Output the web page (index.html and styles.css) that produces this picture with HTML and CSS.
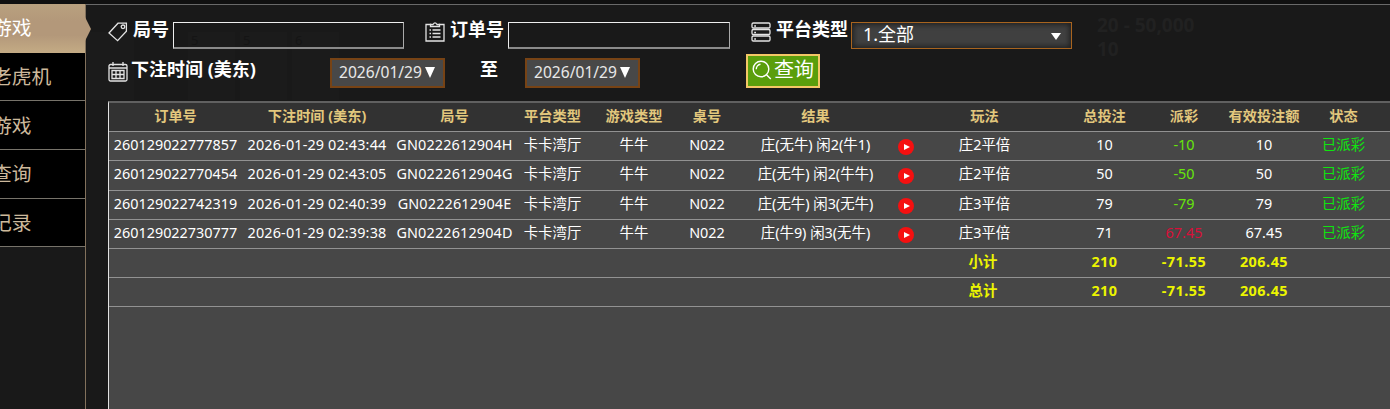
FILE: index.html
```html
<!DOCTYPE html>
<html lang="zh-CN">
<head>
    <meta charset="UTF-8">
    <meta name="viewport" content="width=device-width, initial-scale=1.0">
    <title>下注记录</title>
    <link rel="stylesheet" href="styles.css">
</head>
<body>
    <!-- 背景牌桌, 被遮罩压暗 -->
    <div class="backdrop">
        <div class="ghost-card card-1"></div>
        <div class="ghost-card card-2">5</div>
        <div class="ghost-card card-3">5</div>
        <div class="ghost-card card-4">6</div>
        <div class="ghost-text ghost-limit">20 - 50,000</div>
        <div class="ghost-text ghost-total">10</div>
    </div>

    <div class="page">
        <nav class="sidebar">
            <a class="side-item active">游戏</a>
            <a class="side-item">老虎机</a>
            <a class="side-item">游戏</a>
            <a class="side-item">查询</a>
            <a class="side-item">记录</a>
        </nav>

        <main class="main">
            <div class="filters">
                <div class="filter-row">
                    <div class="field field-round">
                        <svg class="icon" viewBox="0 0 20 20"><path d="M1 11 L10 1.2 H18.4 V9.2 L9.6 18.7 Z"/><circle cx="15" cy="4.8" r="1.8"/></svg>
                        <label class="label">局号</label>
                        <input class="text-input input-round" type="text">
                    </div>
                    <div class="field field-order">
                        <svg class="icon" viewBox="0 0 20 20"><path d="M6 2.5 H1 V19 H19 V2.5 H14"/><path d="M5.5 4.5 V2.5 H8 Q10 -.8 12 2.5 H14.5 V4.5 Z"/><path d="M7.5 8 H15.5 M7.5 11.5 H15.5 M7.5 15 H15.5 M4.5 8 H6 M4.5 11.5 H6 M4.5 15 H6"/></svg>
                        <label class="label">订单号</label>
                        <input class="text-input input-order" type="text">
                    </div>
                    <div class="field">
                        <svg class="icon" viewBox="0 0 20 20"><rect x="1" y="1" width="18" height="5" rx="1.3"/><rect x="1" y="7.5" width="18" height="5" rx="1.3"/><rect x="1" y="14" width="18" height="5" rx="1.3"/><path d="M3.2 4 H5 M3.2 10.5 H5 M3.2 17 H5"/></svg>
                        <label class="label">平台类型</label>
                        <div class="select"><span>1.全部</span><i class="caret"></i></div>
                    </div>
                </div>
                <div class="filter-row row-date">
                    <svg class="icon" viewBox="0 0 20 20"><rect x="1" y="2.5" width="18" height="16.5" rx="1.5"/><path d="M1 6 H19 M5 0 V4 M15 0 V4 M4 8.5 H16 V16.5 H4 Z M4 12.5 H16 M8 8.5 V16.5 M12 8.5 V16.5"/></svg>
                    <label class="label label-date">下注时间 (美东)</label>
                    <button class="date">2026/01/29<i class="caret"></i></button>
                    <span class="label label-to">至</span>
                    <button class="date">2026/01/29<i class="caret"></i></button>
                    <button class="search">
                        <svg class="search-icon" viewBox="0 0 20 20"><circle cx="9" cy="9" r="7.8"/><path d="M14.5 14.7 L18.8 19 M4.3 9.2 A4.8 4.8 0 0 1 8.5 4.3"/></svg>
                        <span>查询</span>
                    </button>
                </div>
            </div>

            <div class="table-box">
                <table class="table">
                    <colgroup>
                        <col class="c-order"><col class="c-time"><col class="c-round"><col class="c-platform">
                        <col class="c-game"><col class="c-desk"><col class="c-result"><col class="c-play">
                        <col class="c-method"><col class="c-bet"><col class="c-payout"><col class="c-valid"><col class="c-status"><col>
                    </colgroup>
                    <thead>
                        <tr>
                            <th>订单号</th><th>下注时间 (美东)</th><th>局号</th><th>平台类型</th><th>游戏类型</th><th>桌号</th><th>结果</th><th></th>
                            <th>玩法</th><th>总投注</th><th>派彩</th><th>有效投注额</th><th>状态</th><th></th>
                        </tr>
                    </thead>
                    <tbody>
                        <tr>
                            <td>260129022777857</td><td class="time">2026-01-29 02:43:44</td><td class="round">GN0222612904H</td><td>卡卡湾厅</td><td>牛牛</td><td>N022</td>
                            <td>庄(无牛) 闲2(牛1)</td><td><i class="play"></i></td><td>庄2平倍</td><td>10</td><td class="lose">-10</td><td>10</td><td class="paid">已派彩</td><td></td>
                        </tr>
                        <tr>
                            <td>260129022770454</td><td class="time">2026-01-29 02:43:05</td><td class="round">GN0222612904G</td><td>卡卡湾厅</td><td>牛牛</td><td>N022</td>
                            <td>庄(无牛) 闲2(牛牛)</td><td><i class="play"></i></td><td>庄2平倍</td><td>50</td><td class="lose">-50</td><td>50</td><td class="paid">已派彩</td><td></td>
                        </tr>
                        <tr>
                            <td>260129022742319</td><td class="time">2026-01-29 02:40:39</td><td class="round">GN0222612904E</td><td>卡卡湾厅</td><td>牛牛</td><td>N022</td>
                            <td>庄(无牛) 闲3(无牛)</td><td><i class="play"></i></td><td>庄3平倍</td><td>79</td><td class="lose">-79</td><td>79</td><td class="paid">已派彩</td><td></td>
                        </tr>
                        <tr>
                            <td>260129022730777</td><td class="time">2026-01-29 02:39:38</td><td class="round">GN0222612904D</td><td>卡卡湾厅</td><td>牛牛</td><td>N022</td>
                            <td>庄(牛9) 闲3(无牛)</td><td><i class="play"></i></td><td>庄3平倍</td><td>71</td><td class="win">67.45</td><td>67.45</td><td class="paid">已派彩</td><td></td>
                        </tr>
                        <tr class="sum">
                            <td colspan="8"></td><td class="sum-name">小计</td><td>210</td><td>-71.55</td><td>206.45</td><td colspan="2"></td>
                        </tr>
                        <tr class="sum">
                            <td colspan="8"></td><td class="sum-name">总计</td><td>210</td><td>-71.55</td><td>206.45</td><td colspan="2"></td>
                        </tr>
                    </tbody>
                </table>
            </div>
        </main>
    </div>
</body>
</html>
```

FILE: styles.css
```css
* {
    box-sizing: border-box;
}

body {
    margin: 0;
    height: 409px;
    overflow: hidden;
    background: #191919;
    color: #fff;
    font-family: "Noto Sans", "Noto Sans CJK SC", sans-serif;
    font-size: 14.4px;
}

button,
input {
    font-family: inherit;
    margin: 0;
}

/* 背景 */
.backdrop {
    position: absolute;
    inset: 0;
    overflow: hidden;
}

.ghost-card {
    position: absolute;
    top: 32px;
    width: 47px;
    height: 68px;
    padding: 0 3px;
    background: #1b1b1b;
    color: #151515;
    font-size: 13px;
    line-height: 16px;
}

.card-1 { left: 87px; }
.card-2 { left: 188px; }
.card-3 { left: 240px; }
.card-4 { left: 292px; }

.ghost-text {
    position: absolute;
    color: #212121;
    font-weight: bold;
    font-size: 19px;
    line-height: 24px;
}

.ghost-limit { left: 1097px; top: 13px; }
.ghost-total { left: 1097px; top: 37px; }

.page {
    position: relative;
    display: flex;
    height: 409px;
    border-top: 4px solid #101010;
}

/* 左侧菜单 */
.sidebar {
    width: 86px;
    flex: none;
    border-right: 1px solid #82715c;
}

.side-item {
    display: flex;
    align-items: center;
    height: 48.7px;
    padding-bottom: 2px;
    background: #000;
    border-bottom: 1px solid #77736a;
    color: #cdb99c;
    font-size: 19.8px;
    white-space: nowrap;
    text-indent: -8px;
}

.side-item.active {
    position: relative;
    background: linear-gradient(#b9a17f, #b3987a 35%, #b3987a 65%, #c3aa84);
    border-bottom-color: #c3aa84;
    color: #fff;
}

.side-item.active::after {
    content: '';
    position: absolute;
    left: 85px;
    top: 13px;
    border-left: 6px solid #b3987a;
    border-top: 12px solid transparent;
    border-bottom: 12px solid transparent;
}

.main {
    flex: 1;
    min-width: 0;
    display: flex;
    flex-direction: column;
    padding-left: 22px;
    border-top: 1px solid #696969;
}

/* 查询条件 */
.filters {
    height: 96px;
    flex: none;
    padding-top: 17px;
}

.filter-row {
    display: flex;
    align-items: flex-start;
    height: 32px;
}

.field {
    display: flex;
    align-items: flex-start;
}

.field-round { width: 317px; }
.field-order { width: 326px; }

.icon {
    width: 20px;
    height: 20px;
    margin-right: 5px;
    flex: none;
    fill: none;
    stroke: #e4e4e4;
    stroke-width: 1.3;
}

.label {
    margin-top: -5px;
    font-size: 18px;
    font-weight: bold;
    line-height: 25px;
    white-space: nowrap;
}

.text-input {
    height: 27px;
    margin-left: 4px;
    padding: 0 4px;
    background: transparent;
    border: 1px solid #eee;
    border-right-color: #aaa;
    border-bottom: 2px solid #8a8a8a;
    color: #fff;
}

.input-round { width: 231px; }
.input-order { width: 222px; }

.select {
    display: flex;
    align-items: center;
    justify-content: space-between;
    width: 221px;
    height: 27px;
    margin-left: 3px;
    padding: 0 10px 4px 11px;
    background: #404040;
    border: 1px solid #a8641f;
    box-shadow: inset 0 0 5px 2px #222;
    font-size: 18px;
    line-height: 22px;
}

.caret {
    display: inline-block;
    border-top: 11px solid #fff;
    border-left: 5.5px solid transparent;
    border-right: 5.5px solid transparent;
}

.select .caret {
    margin-top: 5px;
    border-top-width: 7px;
    border-left-width: 5px;
    border-right-width: 5px;
}

.row-date {
    padding-top: 8px;
}

.row-date .icon {
    margin-right: 3px;
}

.label-date {
    width: 199px;
    font-size: 18px;
}

.date {
    display: flex;
    align-items: center;
    gap: 3px;
    width: 115px;
    height: 30px;
    margin-top: -4px;
    padding: 0 0 2px 7px;
    background: #484848;
    border: 2px solid #774315;
    color: #e8e8e8;
    font-size: 15.6px;
    line-height: 22px;
}

.date .caret {
    margin-top: 1px;
}

.label-to {
    width: 80px;
    padding-left: 35px;
}

.search {
    display: flex;
    align-items: flex-start;
    gap: 2px;
    width: 74px;
    height: 34px;
    margin: -8px 0 0 106px;
    padding: 0 0 0 4px;
    background: #5a9e0c;
    border: 2px solid #f3c766;
    color: #fff;
    font-size: 20px;
    line-height: 28px;
    white-space: nowrap;
}

.search-icon {
    width: 20px;
    height: 20px;
    margin-top: 4px;
    flex: none;
    fill: none;
    stroke: #fff;
    stroke-width: 1.4;
}

/* 记录表格 */
.table-box {
    flex: 1;
    background: #474747;
    border-left: 1px solid #e2e2e2;
    border-top: 2px solid #606060;
    overflow: hidden;
}

.table {
    width: 1281px;
    table-layout: fixed;
    border-collapse: separate;
    border-spacing: 0;
}

.table th,
.table td {
    height: 29.2px;
    padding: 0 0 2px;
    border-bottom: 1px solid #929292;
    text-align: center;
    line-height: 20px;
    white-space: nowrap;
}

.table th {
    background: #323232;
    color: #e2c77d;
    font-size: 14.2px;
    font-weight: bold;
}

.c-order { width: 133px; }
.c-time { width: 150px; }
.c-round { width: 125px; }
.c-platform { width: 71px; }
.c-game { width: 92px; }
.c-desk { width: 54px; }
.c-result { width: 163px; }
.c-play { width: 17px; }
.c-method { width: 141px; }
.c-bet { width: 99px; }
.c-payout { width: 60px; }
.c-valid { width: 100px; }
.c-status { width: 59px; }

.table .time { letter-spacing: 0.15px; }
.table .round { letter-spacing: 0.15px; }
.table .lose { color: #66e60a; }
.table .win { color: #d90f39; }
.table .paid { color: #0ee60e; }

.table .sum td {
    color: #ecf500;
    font-weight: bold;
    letter-spacing: 0.5px;
}

.table .sum .sum-name {
    padding-right: 3px;
    letter-spacing: 0;
}

.play {
    display: block;
    width: 16px;
    height: 16px;
    margin: 4px auto 0;
    padding: 5px 0 0 6px;
    border-radius: 50%;
    background: #f51010;
}

.play::before {
    content: '';
    display: block;
    width: 0;
    border-left: 6px solid #fff;
    border-top: 3px solid transparent;
    border-bottom: 3px solid transparent;
}
```
